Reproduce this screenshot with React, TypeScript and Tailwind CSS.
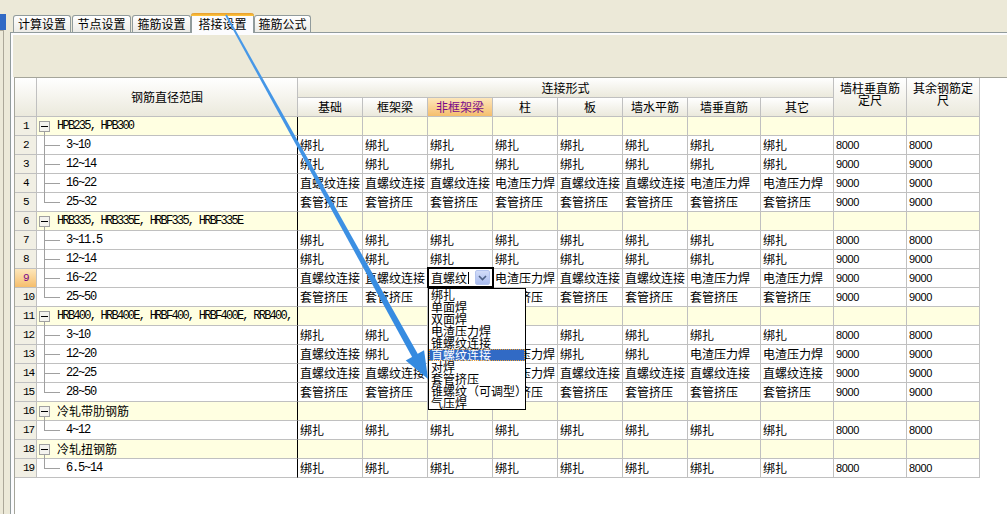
import React from 'react';

const CJK = '"Noto Sans CJK SC", "Liberation Sans", sans-serif';
const MONO = '"Liberation Mono", "Noto Sans CJK SC", monospace';
const NUM = '"Liberation Sans", "Noto Sans CJK SC", sans-serif';

type Row =
  | { type: 'group'; label: string }
  | { type: 'child'; label: string; last?: boolean; cells: string[] };

const B = '绑扎';
const Z = '直螺纹连接';
const D = '电渣压力焊';
const T = '套管挤压';

const rows: Row[] = [
  { type: 'group', label: 'HPB235, HPB300' },
  { type: 'child', label: '3~10', cells: [B, B, B, B, B, B, B, B, '8000', '8000'] },
  { type: 'child', label: '12~14', cells: [B, B, B, B, B, B, B, B, '9000', '9000'] },
  { type: 'child', label: '16~22', cells: [Z, Z, Z, D, Z, Z, D, D, '9000', '9000'] },
  { type: 'child', label: '25~32', last: true, cells: [T, T, T, T, T, T, T, T, '9000', '9000'] },
  { type: 'group', label: 'HRB335, HRB335E, HRBF335, HRBF335E' },
  { type: 'child', label: '3~11.5', cells: [B, B, B, B, B, B, B, B, '8000', '8000'] },
  { type: 'child', label: '12~14', cells: [B, B, B, B, B, B, B, B, '9000', '9000'] },
  { type: 'child', label: '16~22', cells: [Z, Z, '__COMBO__', D, Z, Z, D, D, '9000', '9000'] },
  { type: 'child', label: '25~50', last: true, cells: [T, T, T, T, T, T, T, T, '9000', '9000'] },
  { type: 'group', label: 'HRB400, HRB400E, HRBF400, HRBF400E, RRB400,' },
  { type: 'child', label: '3~10', cells: [B, B, B, B, B, B, B, B, '8000', '8000'] },
  { type: 'child', label: '12~20', cells: [Z, B, B, D, B, B, D, D, '9000', '9000'] },
  { type: 'child', label: '22~25', cells: [Z, Z, Z, D, Z, Z, Z, Z, '9000', '9000'] },
  { type: 'child', label: '28~50', last: true, cells: [T, T, T, T, T, T, T, T, '9000', '9000'] },
  { type: 'group', label: '冷轧带肋钢筋' },
  { type: 'child', label: '4~12', last: true, cells: [B, B, B, B, B, B, B, B, '8000', '8000'] },
  { type: 'group', label: '冷轧扭钢筋' },
  { type: 'child', label: '6.5~14', last: true, cells: [B, B, B, B, B, B, B, B, '8000', '8000'] },
];

const widthCls = [
  'w-[65px]', 'w-[65px]', 'w-[65px]', 'w-[65px]', 'w-[65px]', 'w-[65px]',
  'w-[73px]', 'w-[73px]', 'w-[73px]', 'w-[73px]',
];

const subHeaders = ['基础', '框架梁', '非框架梁', '柱', '板', '墙水平筋', '墙垂直筋', '其它'];

const dropItems = ['绑扎', '单面焊', '双面焊', '电渣压力焊', '锥螺纹连接', '直螺纹连接', '对焊', '套管挤压', '锥螺纹（可调型）', '气压焊'];

const hdrBg = 'bg-linear-to-b from-[#ffffff] to-[#ebe9dc]';
const selBg = 'bg-linear-to-b from-[#fde7bb] to-[#f5be6c]';

function Tab({ label, selected, cls }: { label: string; selected?: boolean; cls: string }) {
  if (selected) {
    return (
      <div
        className={`${cls} relative -mb-px h-[20px] shrink-0 rounded-t-[3px] border-x border-[#919b9c] bg-[#fcfcfe] text-[12px] leading-[17px] text-black flex justify-center pt-[1px]`}
      >
        <div className="absolute -left-px -right-px top-0 h-[3px] rounded-t-[3px] bg-linear-to-b from-[#e69b2e] to-[#ffc83c]" />
        <span className="mt-[1px]">{label}</span>
      </div>
    );
  }
  return (
    <div
      className={`${cls} h-[17px] shrink-0 rounded-t-[3px] border-x border-t border-[#919b9c] bg-linear-to-b from-[#ffffff] to-[#ecebe6] text-[12px] leading-[16px] text-black flex justify-center`}
    >
      {label}
    </div>
  );
}

function TreeCell({ row }: { row: Row }) {
  if (row.type === 'group') {
    const cjk = row.label.startsWith('冷');
    return (
      <div className="relative w-[261px] shrink-0 h-full border-r border-b border-r-black border-b-[#c0c0c0] bg-[#ffffe1]">
        <div className="absolute left-[2px] top-[4px] w-[11px] h-[11px] border border-[#a0a0a0] bg-[#f4f3ee] flex items-center justify-center">
          <div className="w-[7px] h-px bg-black" />
        </div>
        <div className="absolute left-[7px] top-[15px] bottom-[-1px] w-px bg-[#a0a0a0]" />
        {cjk ? (
          <div className="absolute left-[20px] top-0 h-[18px] leading-[18px] text-[12px] text-black whitespace-nowrap" style={{ fontFamily: CJK }}>
            {row.label}
          </div>
        ) : (
          <div className="absolute left-[20px] top-0 h-[18px] leading-[19px] text-[12px] tracking-[-1.75px] text-black whitespace-nowrap" style={{ fontFamily: MONO }}>
            {row.label}
          </div>
        )}
      </div>
    );
  }
  return (
    <div className="relative w-[261px] shrink-0 h-full border-r border-b border-r-black border-b-[#c0c0c0] bg-white">
      <div className={`absolute left-[7px] top-0 w-px bg-[#a0a0a0] ${row.last ? 'h-[9px]' : 'h-[19px]'}`} />
      <div className="absolute left-[7px] top-[9px] w-[16px] h-px bg-[#a0a0a0]" />
      <div
        className="absolute left-[29px] top-0 h-[18px] leading-[19px] text-[12px] tracking-[-1.2px] text-black whitespace-nowrap"
        style={{ fontFamily: MONO }}
      >
        {row.label}
      </div>
    </div>
  );
}

function Combo() {
  return (
    <div className="absolute -left-[1px] -top-[2px] z-10">
      <div className="relative w-[67px] h-[21px] border-2 border-black bg-white">
        <div className="absolute left-[2px] top-0 h-[17px] leading-[17px] text-[12px] text-black flex items-center" style={{ fontFamily: CJK }}>
          直螺纹
          <span className="ml-[1px] inline-block w-px h-[12px] bg-black" />
        </div>
        <div className="absolute left-[46px] top-[1px] w-[15px] h-[15px] rounded-[2px] border border-[#b4c4ee] bg-linear-to-b from-[#d2dcf8] to-[#a9bcef] flex items-center justify-center">
          <svg width="9" height="6" viewBox="0 0 9 6">
            <path d="M1 1 L4.5 4.5 L8 1" fill="none" stroke="#4d6185" strokeWidth="1.6" />
          </svg>
        </div>
      </div>
      <div className="absolute left-[1px] top-[21px] w-[98px] border border-black bg-white">
        {dropItems.map((it, i) => (
          <div
            key={i}
            className={`h-[12px] leading-[12px] text-[12px] pl-[2px] whitespace-nowrap ${
              i === 5 ? 'bg-[#316ac5] text-white outline outline-1 outline-dotted outline-[#f0a030] -outline-offset-1' : 'text-black'
            }`}
            style={{ fontFamily: CJK }}
          >
            {it}
          </div>
        ))}
      </div>
    </div>
  );
}

function DataCell({ value, w, group }: { value: string; w: string; group: boolean }) {
  const isNum = /^\d+$/.test(value);
  return (
    <div
      className={`${w} relative shrink-0 h-full border-r border-b border-[#c0c0c0] ${group ? 'bg-[#ffffe1]' : 'bg-white'} pl-[2px] leading-[18px] whitespace-nowrap overflow-visible ${isNum ? 'text-[11px] tracking-[-0.4px]' : 'text-[12px]'} text-black`}
      style={{ fontFamily: isNum ? NUM : CJK }}
    >
      {value === '__COMBO__' ? <Combo /> : value}
    </div>
  );
}

export default function App() {
  const sx = 226, sy = 15, tx = 428, ty = 379;
  const dx = tx - sx, dy = ty - sy;
  const len = Math.sqrt(dx * dx + dy * dy);
  const ux = dx / len, uy = dy / len;
  const px = uy, py = -ux;
  const hl = 27, hw = 10.5;
  const bx = tx - ux * hl, by = ty - uy * hl;
  const shaft = [
    [sx + px * 0.9, sy + py * 0.9],
    [bx + ux * 3 + px * 3.3, by + uy * 3 + py * 3.3],
    [bx + ux * 3 - px * 3.3, by + uy * 3 - py * 3.3],
    [sx - px * 0.9, sy - py * 0.9],
  ]
    .map((p) => p.join(','))
    .join(' ');
  const head = [
    [tx, ty],
    [bx + px * hw, by + py * hw],
    [bx - px * hw, by - py * hw],
  ]
    .map((p) => p.join(','))
    .join(' ');

  return (
    <div className="relative w-[1007px] h-[514px] overflow-hidden bg-[#ece9d8] flex" style={{ fontFamily: CJK }}>
      {/* left strip */}
      <div className="relative w-[10px] shrink-0 flex flex-col">
        <div className="h-[14px]" />
        <div className="w-[6px] h-[16px] bg-[#316ac5]" />
        <div className="flex flex-1">
          <div className="w-[4px] border-r border-[#aca899] border-t" />
          <div className="flex-1" />
        </div>
      </div>

      {/* main */}
      <div className="flex-1 flex flex-col min-w-0">
        {/* tabs */}
        <div className="h-[32px] flex items-end">
          <Tab label="计算设置" cls="ml-[3px] w-[58px]" />
          <Tab label="节点设置" cls="ml-[1px] w-[59px]" />
          <Tab label="箍筋设置" cls="ml-[1px] w-[59px]" />
          <Tab label="搭接设置" cls="ml-0 w-[63px] z-10" selected />
          <Tab label="箍筋公式" cls="ml-0 w-[57px]" />
        </div>
        {/* panel */}
        <div className="flex-1 border-t border-l border-[#919b9c] bg-[#fcfcfe] pt-[2px] pl-[2px] flex flex-col min-h-0">
          <div className="h-[42px] bg-[#ece9d8]" />
          <div className="flex-1 ml-[1px] bg-white border-t border-l border-[#a5a59a] flex flex-col">
            {/* header */}
            <div className="flex h-[39px]">
              <div className={`w-[22px] shrink-0 border-r border-b border-[#c0c0c0] ${hdrBg}`} />
              <div className={`w-[261px] shrink-0 border-r border-b border-[#c0c0c0] ${hdrBg} flex items-center justify-center text-[12px] text-black`}>
                钢筋直径范围
              </div>
              <div className="w-[536px] shrink-0 flex flex-col">
                <div className={`h-[20px] border-r border-b border-[#c0c0c0] ${hdrBg} flex items-center justify-center text-[12px] text-black`}>
                  连接形式
                </div>
                <div className="flex h-[19px]">
                  {subHeaders.map((h, i) => (
                    <div
                      key={h}
                      className={`${widthCls[i]} shrink-0 border-r border-b border-[#c0c0c0] ${
                        i === 2 ? `${selBg} text-[#7a0a8a]` : `${hdrBg} text-black`
                      } flex items-center justify-center text-[12px]`}
                    >
                      {h}
                    </div>
                  ))}
                </div>
              </div>
              <div className={`w-[73px] shrink-0 border-r border-b border-[#c0c0c0] ${hdrBg} text-[12px] leading-[12px] text-black text-center pt-[4px]`}>
                墙柱垂直筋<br />定尺
              </div>
              <div className={`w-[73px] shrink-0 border-r border-b border-[#c0c0c0] ${hdrBg} text-[12px] leading-[12px] text-black text-center pt-[4px]`}>
                其余钢筋定<br />尺
              </div>
            </div>
            {/* rows */}
            {rows.map((row, i) => {
              const n = i + 1;
              const sel = n === 9;
              return (
                <div key={i} className="flex h-[19px]">
                  <div
                    className={`w-[22px] shrink-0 border-r border-b border-[#c0c0c0] ${
                      sel ? `${selBg} text-[#7a0a8a]` : 'bg-[#f1efe4] text-black'
                    } pl-[8px] text-[11px] leading-[18px] tracking-[-1px]`}
                    style={{ fontFamily: MONO }}
                  >
                    {n}
                  </div>
                  <TreeCell row={row} />
                  {row.type === 'group'
                    ? widthCls.map((w, j) => <DataCell key={j} value="" w={w} group />)
                    : row.cells.map((c, j) => <DataCell key={j} value={c} w={widthCls[j]} group={false} />)}
                </div>
              );
            })}
          </div>
        </div>
      </div>

      {/* annotation arrow */}
      <svg className="pointer-events-none absolute left-0 top-0 z-30" width="1007" height="514" viewBox="0 0 1007 514">
        <defs>
          <linearGradient id="ag" x1="0" y1="0" x2="1" y2="1">
            <stop offset="0" stopColor="#4a9ae8" />
            <stop offset="1" stopColor="#348ae0" />
          </linearGradient>
        </defs>
        <polygon points={shaft} fill="url(#ag)" />
        <polygon points={head} fill="#348ae0" />
      </svg>
    </div>
  );
}
